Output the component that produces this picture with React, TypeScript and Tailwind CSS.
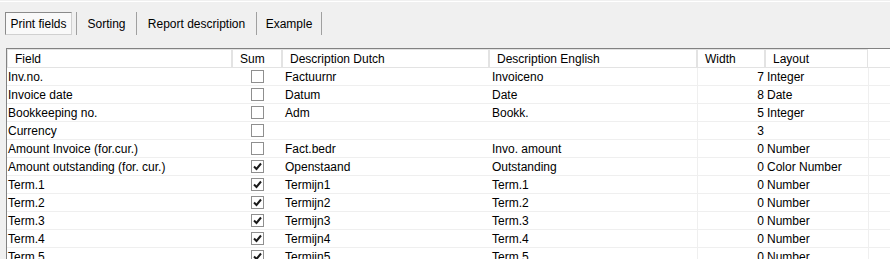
import React from "react";

type Row = { f: string; sum: boolean | null; nl: string; en: string; w: string; lay: string };

const rows: Row[] = [
  { f: "Inv.no.", sum: false, nl: "Factuurnr", en: "Invoiceno", w: "7", lay: "Integer" },
  { f: "Invoice date", sum: false, nl: "Datum", en: "Date", w: "8", lay: "Date" },
  { f: "Bookkeeping no.", sum: false, nl: "Adm", en: "Bookk.", w: "5", lay: "Integer" },
  { f: "Currency", sum: false, nl: "", en: "", w: "3", lay: "" },
  { f: "Amount Invoice (for.cur.)", sum: false, nl: "Fact.bedr", en: "Invo. amount", w: "0", lay: "Number" },
  { f: "Amount outstanding (for. cur.)", sum: true, nl: "Openstaand", en: "Outstanding", w: "0", lay: "Color Number" },
  { f: "Term.1", sum: true, nl: "Termijn1", en: "Term.1", w: "0", lay: "Number" },
  { f: "Term.2", sum: true, nl: "Termijn2", en: "Term.2", w: "0", lay: "Number" },
  { f: "Term.3", sum: true, nl: "Termijn3", en: "Term.3", w: "0", lay: "Number" },
  { f: "Term.4", sum: true, nl: "Termijn4", en: "Term.4", w: "0", lay: "Number" },
  { f: "Term.5", sum: true, nl: "Termijn5", en: "Term.5", w: "0", lay: "Number" },
];

function Check({ on }: { on: boolean }) {
  return (
    <div className="w-[13px] h-[13px] border border-[#8f8f8f] bg-white flex items-center justify-center">
      {on && (
        <svg width="9" height="9" viewBox="0 0 9 9">
          <path d="M1 4.5 L3.5 7 L8 1.5" stroke="#1a1a1a" strokeWidth="2" fill="none" />
        </svg>
      )}
    </div>
  );
}

export default function App() {
  const hdr = "h-full flex items-center pl-[7px] pt-[1px] border border-[#e3e3e3] bg-white";
  return (
    <div
      className="w-[890px] h-[259px] bg-[#f0f0f0] overflow-hidden text-[12px] text-black"
      style={{ fontFamily: '"Liberation Sans", Arial, sans-serif' }}
    >
      <div className="h-[1px] mt-[1px] bg-white" />
      {/* toolbar tabs */}
      <div className="flex items-center h-[23px] mt-[10px] pl-[5px]">
        <div className="w-[67px] h-[23px] flex items-center justify-center border border-[#8a8a8a] border-r-[#d0d0d0] border-b-[#d0d0d0] bg-[#f9f9f9]">
          Print fields
        </div>
        <div className="w-[4px]" />
        <div className="w-[1px] h-[23px] bg-[#a0a0a0]" />
        <div className="w-[59px] flex items-center justify-center">Sorting</div>
        <div className="w-[1px] h-[23px] bg-[#a0a0a0]" />
        <div className="w-[119px] flex items-center justify-center">Report description</div>
        <div className="w-[1px] h-[23px] bg-[#a0a0a0]" />
        <div className="w-[64px] flex items-center justify-center">Example</div>
        <div className="w-[1px] h-[23px] bg-[#a0a0a0]" />
      </div>
      {/* grid */}
      <div className="ml-[6px] mt-[13px] border-l border-t border-[#828282] bg-white h-[220px]">
        <div className="flex h-[19px]">
          <div className={"w-[225px] " + hdr}>Field</div>
          <div className={"w-[50px] " + hdr}>Sum</div>
          <div className={"w-[207px] " + hdr}>Description Dutch</div>
          <div className={"w-[208px] " + hdr}>Description English</div>
          <div className={"w-[68px] " + hdr}>Width</div>
          <div className={"w-[103px] " + hdr}>Layout</div>
          <div className="flex-1 border-b border-[#e3e3e3]" />
        </div>
        {rows.map((r, i) => (
          <div key={i} className="flex h-[18px] border-b border-[#efefef]">
            <div className="w-[225px] pl-[1px] pt-[1px] flex items-center whitespace-nowrap">{r.f}</div>
            <div className="w-[50px] flex items-center justify-center">
              {r.sum !== null && <Check on={r.sum} />}
            </div>
            <div className="w-[207px] pl-[3px] pt-[1px] flex items-center">{r.nl}</div>
            <div className="w-[208px] pl-[3px] pt-[1px] flex items-center">{r.en}</div>
            <div className="w-[68px] border-l border-[#efefef] pr-[1px] pt-[1px] flex items-center justify-end">{r.w}</div>
            <div className="w-[103px] pl-[2px] pt-[1px] flex items-center whitespace-nowrap">{r.lay}</div>
            <div className="flex-1 border-l border-[#efefef]" />
          </div>
        ))}
      </div>
    </div>
  );
}
